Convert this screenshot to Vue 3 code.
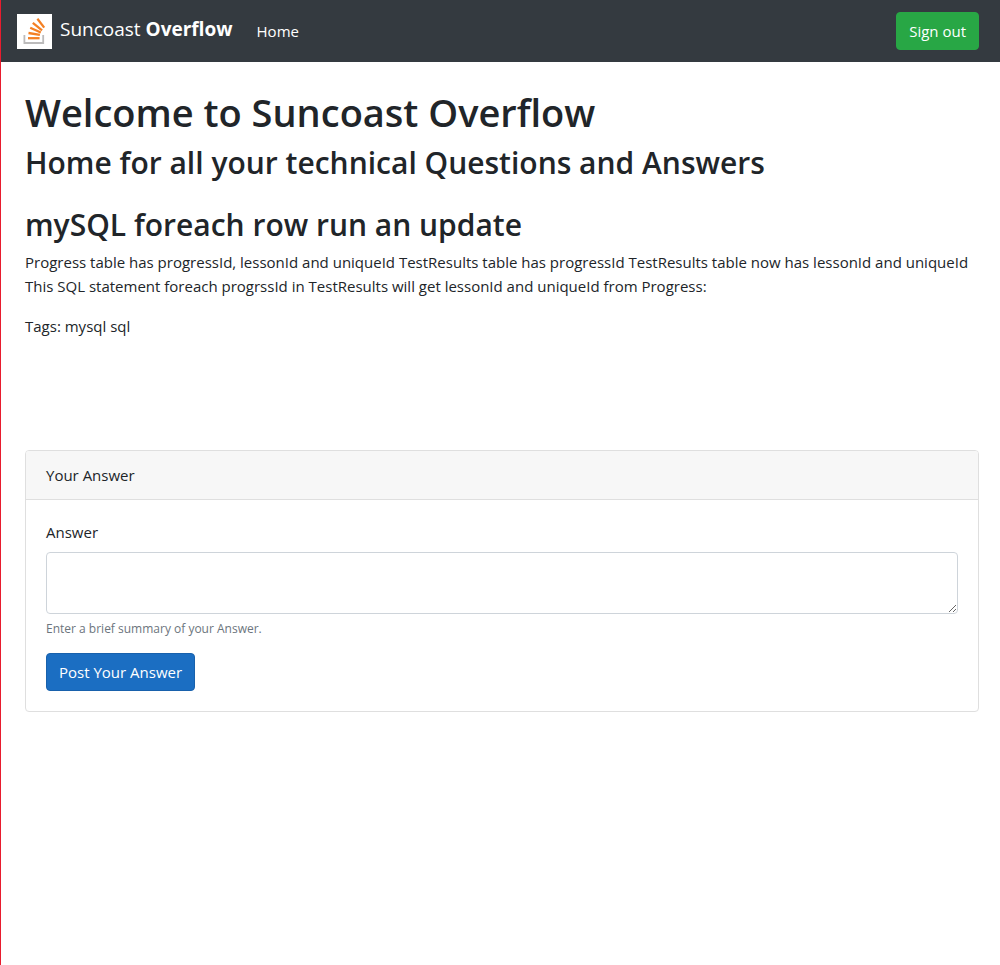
<script setup>
import { ref } from 'vue'

const answer = ref('')
const tags = ['mysql', 'sql']
</script>

<template>
  <div class="app">
    <nav class="navbar">
      <a class="brand" href="#">
        <svg class="logo" viewBox="0 0 35 35" aria-hidden="true">
          <rect width="35" height="35" fill="#fff" />
          <path d="M7.4 21v8h18.8v-8" fill="none" stroke="#bcbbbb" stroke-width="1.8" />
          <g stroke="#f48024" stroke-width="2.3" fill="none">
            <path d="M11 24.2h11.6" />
            <path d="M11.5 19l11.4 1.9" />
            <path d="M13.2 13.8l10.6 4.7" />
            <path d="M15.8 8.9l9.3 7.4" />
            <path d="M20.4 4.8l6.8 8.8" />
          </g>
        </svg>
        <span class="name">Suncoast <strong>Overflow</strong></span>
      </a>
      <a class="link" href="#">Home</a>
      <button class="btn success" type="button">Sign out</button>
    </nav>

    <main class="content">
      <header>
        <h1>Welcome to Suncoast Overflow</h1>
        <h2>Home for all your technical Questions and Answers</h2>
      </header>

      <article class="question">
        <h2>mySQL foreach row run an update</h2>
        <p>
          Progress table has progressId, lessonId and uniqueId TestResults table has progressId TestResults table now has lessonId and uniqueId
          <br />This SQL statement foreach progrssId in TestResults will get lessonId and uniqueId from Progress:
        </p>
        <p>Tags: {{ tags.join(' ') }}</p>
      </article>

      <section class="card">
        <div class="card-header">Your Answer</div>
        <form class="card-body" @submit.prevent>
          <label for="answer">Answer</label>
          <textarea id="answer" v-model="answer" rows="2" aria-describedby="answer-help"></textarea>
          <small id="answer-help">Enter a brief summary of your Answer.</small>
          <button class="btn primary" type="submit">Post Your Answer</button>
        </form>
      </section>
    </main>
  </div>
</template>

<style>
body {
  margin: 0;
  background: #fff;
}
</style>

<style scoped>
.app {
  box-sizing: border-box;
  min-height: 100vh;
  border-left: 1px solid #e81c2e;
  color: #212529;
  font-family: 'Segoe UI', 'Open Sans', 'Noto Sans', sans-serif;
  font-size: 15px;
  line-height: 24px;
}
.navbar {
  display: flex;
  align-items: center;
  padding: 12px 21px 12px 16px;
  background: #343a40;
}
.brand {
  display: flex;
  align-items: flex-start;
  gap: 8px;
  margin-right: 24px;
  color: #fff;
  font-size: 19px;
  line-height: 30px;
  text-decoration: none;
}
.logo {
  display: block;
  width: 35px;
  height: 35px;
}
.link {
  color: #fff;
  text-decoration: none;
}
.btn {
  padding: 6px 12px;
  border: 1px solid;
  border-radius: 4px;
  color: #fff;
  font: inherit;
  cursor: pointer;
}
.success {
  margin-left: auto;
  background: #28a745;
  border-color: #28a745;
}
.primary {
  align-self: flex-start;
  margin-top: 13px;
  background: #1b6ec2;
  border-color: #1861ac;
}
.content {
  padding: 26px 21px 24px 24px;
}
h1,
h2 {
  margin: 0 0 8px;
  font-weight: 600;
}
h1 {
  font-size: 38px;
  line-height: 48px;
}
h2 {
  margin-bottom: 6px;
  font-size: 30px;
  line-height: 38px;
}
.question {
  margin-top: 24px;
}
p {
  margin: 0 0 16px;
}
.card {
  margin-top: 112px;
  border: 1px solid #dfdfdf;
  border-radius: 4px;
  overflow: hidden;
}
.card-header {
  padding: 12px 20px;
  background: #f7f7f7;
  border-bottom: 1px solid #dfdfdf;
}
.card-body {
  display: flex;
  flex-direction: column;
  padding: 20px;
}
label {
  margin-bottom: 8px;
}
textarea {
  box-sizing: border-box;
  width: 100%;
  height: 62px;
  padding: 6px 12px;
  border: 1px solid #ced4da;
  border-radius: 4px;
  color: #495057;
  font: inherit;
  resize: vertical;
}
small {
  margin-top: 4px;
  color: #6c757d;
  font-size: 12px;
  line-height: 22px;
}
</style>
